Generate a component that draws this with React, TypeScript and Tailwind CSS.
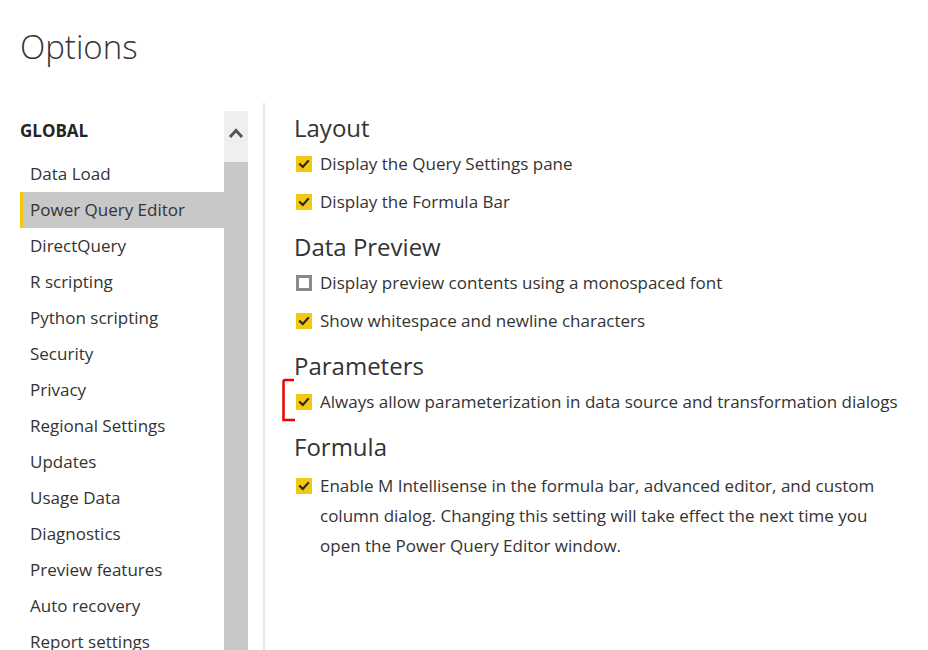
import React from "react";

const FONT = { fontFamily: '"Open Sans", "Noto Sans", Arial, sans-serif' };

const NAV = [
  "Data Load",
  "Power Query Editor",
  "DirectQuery",
  "R scripting",
  "Python scripting",
  "Security",
  "Privacy",
  "Regional Settings",
  "Updates",
  "Usage Data",
  "Diagnostics",
  "Preview features",
  "Auto recovery",
  "Report settings",
];

function Box({ checked }: { checked: boolean }) {
  if (!checked) {
    return <span className="h-4 w-4 shrink-0 border-[3px] border-[#8a8a8a] bg-white" />;
  }
  return (
    <span className="flex h-4 w-4 shrink-0 items-center justify-center bg-[#f2c811]">
      <svg width="12" height="12" viewBox="0 0 12 12" fill="none">
        <path d="M2 6.2 L4.8 9 L10 3.2" stroke="#252423" strokeWidth="2.2" strokeLinecap="square" />
      </svg>
    </span>
  );
}

function Item({ checked, children }: { checked: boolean; children: React.ReactNode }) {
  return (
    <div className="flex h-[38px] items-center gap-2 pl-[2px] text-[17px] text-[#333]">
      <Box checked={checked} />
      <span className="whitespace-nowrap">{children}</span>
    </div>
  );
}

function Heading({ children, gap = true }: { children: React.ReactNode; gap?: boolean }) {
  return (
    <div className={`h-[34px] text-[24px] leading-[34px] text-[#333] ${gap ? "mt-[9px]" : ""}`}>{children}</div>
  );
}

export default function App() {
  return (
    <div className="relative h-[650px] w-[928px] overflow-hidden bg-white" style={FONT}>
      <h1 className="pl-5 pt-[22px] text-[33px] font-light leading-[50px] text-[#333]">Options</h1>

      <div className="mt-[39px] flex h-[539px]">
        {/* left nav */}
        <div className="flex w-[224px] flex-col pt-[6px]">
          <div className="pl-5 text-[17px] font-bold leading-[28px] text-[#252423]">GLOBAL</div>
          <div className="mt-[11px] flex flex-col">
            {NAV.map((n) => (
              <div
                key={n}
                className={`ml-5 flex h-9 shrink-0 items-center pl-[10px] text-[17px] text-[#333] ${
                  n === "Power Query Editor" ? "border-l-[3px] border-[#f2c811] bg-[#c8c8c8] !pl-[7px]" : ""
                }`}
              >
                {n}
              </div>
            ))}
          </div>
        </div>

        {/* scrollbar */}
        <div className="flex w-[24px] flex-col">
          <div className="flex h-[51px] items-center justify-center bg-[#efefef]">
            <svg width="16" height="12" viewBox="0 0 16 12" fill="none" className="-mt-[8px]">
              <path d="M2 10 L8 3.5 L14 10" stroke="#555" strokeWidth="3" />
            </svg>
          </div>
          <div className="flex-1 bg-[#c8c8c8]" />
        </div>

        <div className="ml-[15px] -mt-2 w-[2px] bg-[#e6e6e6]" style={{ height: 560 }} />

        {/* content */}
        <div className="ml-[29px] flex flex-col">
          <Heading gap={false}>Layout</Heading>
          <Item checked>Display the Query Settings pane</Item>
          <Item checked>Display the Formula Bar</Item>

          <Heading>Data Preview</Heading>
          <Item checked={false}>Display preview contents using a monospaced font</Item>
          <Item checked>Show whitespace and newline characters</Item>

          <Heading>Parameters</Heading>
          <Item checked>Always allow parameterization in data source and transformation dialogs</Item>

          <Heading>Formula</Heading>
          <div className="mt-[7px] flex gap-2 pl-[2px] text-[17px] leading-[30px] text-[#333]">
            <span className="mt-[7px]">
              <Box checked />
            </span>
            <span className="whitespace-nowrap">
              Enable M Intellisense in the formula bar, advanced editor, and custom
              <br />
              column dialog. Changing this setting will take effect the next time you
              <br />
              open the Power Query Editor window.
            </span>
          </div>
        </div>
      </div>

      {/* red annotation bracket */}
      <svg className="absolute left-[278px] top-[376px]" width="24" height="50" viewBox="0 0 24 50" fill="none">
        <path d="M16 4 L7 4 Q5.5 4 5.5 6 L5.5 44 L17 44" stroke="#ee0000" strokeWidth="2.5" />
      </svg>
    </div>
  );
}
